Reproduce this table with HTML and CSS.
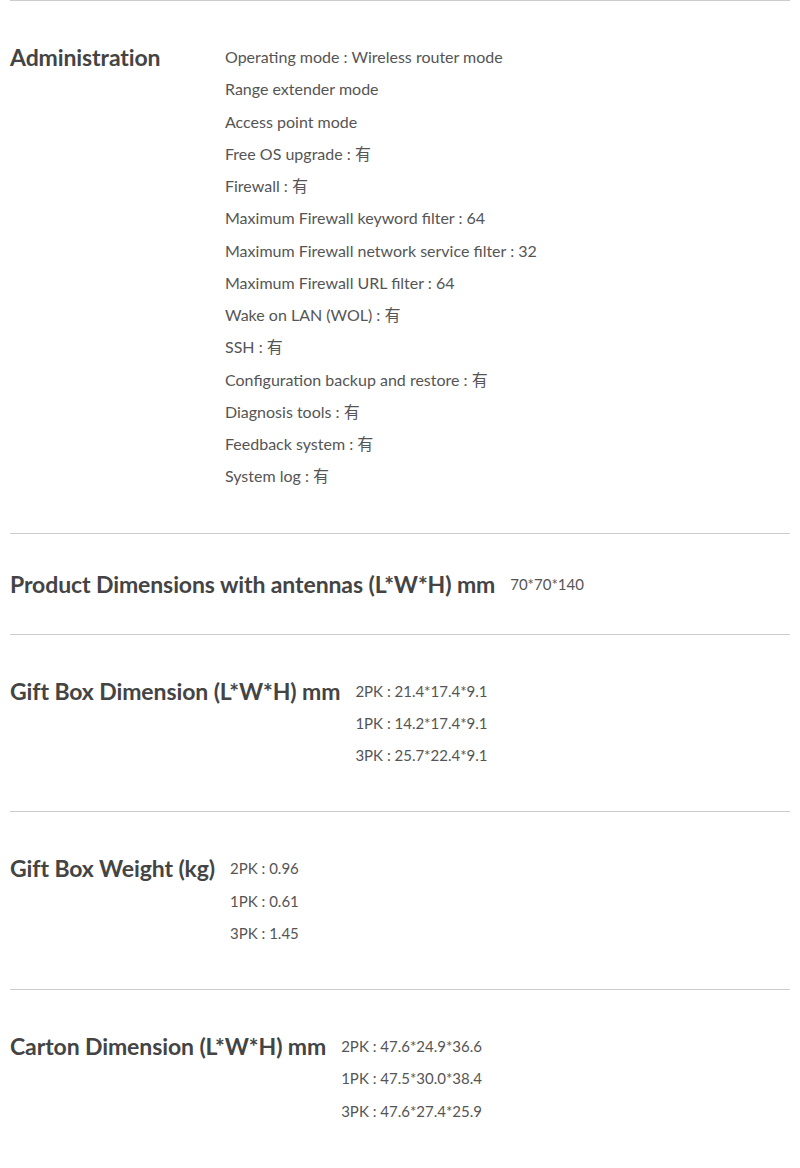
FILE: index.html
```html
<!DOCTYPE html>
<html lang="en">
<head>
<meta charset="utf-8">
<title>Specifications</title>
<link rel="stylesheet" href="styles.css">
</head>
<body>
<div class="specs">
  <section class="spec">
    <h3 class="spec-title">Administration</h3>
    <ul class="spec-values">
      <li>Operating mode : Wireless router mode</li>
      <li>Range extender mode</li>
      <li>Access point mode</li>
      <li>Free OS upgrade : 有</li>
      <li>Firewall : 有</li>
      <li>Maximum Firewall keyword filter : 64</li>
      <li>Maximum Firewall network service filter : 32</li>
      <li>Maximum Firewall URL filter : 64</li>
      <li>Wake on LAN (WOL) : 有</li>
      <li>SSH : 有</li>
      <li>Configuration backup and restore : 有</li>
      <li>Diagnosis tools : 有</li>
      <li>Feedback system : 有</li>
      <li>System log : 有</li>
    </ul>
  </section>
  <section class="spec spec-single">
    <h3 class="spec-title">Product Dimensions with antennas (L*W*H) mm</h3>
    <ul class="spec-values small">
      <li>70*70*140</li>
    </ul>
  </section>
  <section class="spec">
    <h3 class="spec-title">Gift Box Dimension (L*W*H) mm</h3>
    <ul class="spec-values numeric">
      <li>2PK : 21.4*17.4*9.1</li>
      <li>1PK : 14.2*17.4*9.1</li>
      <li>3PK : 25.7*22.4*9.1</li>
    </ul>
  </section>
  <section class="spec">
    <h3 class="spec-title">Gift Box Weight (kg)</h3>
    <ul class="spec-values numeric">
      <li>2PK : 0.96</li>
      <li>1PK : 0.61</li>
      <li>3PK : 1.45</li>
    </ul>
  </section>
  <section class="spec">
    <h3 class="spec-title">Carton Dimension (L*W*H) mm</h3>
    <ul class="spec-values numeric">
      <li>2PK : 47.6*24.9*36.6</li>
      <li>1PK : 47.5*30.0*38.4</li>
      <li>3PK : 47.6*27.4*25.9</li>
    </ul>
  </section>
</div>
</body>
</html>
```

FILE: styles.css
```css
html, body {
  margin: 0;
  padding: 0;
  background: #ffffff;
}

body {
  font-family: "Lato", "Noto Sans CJK SC", sans-serif;
  color: #555555;
}

.specs {
  padding: 0 10px;
}

.spec {
  display: flex;
  align-items: flex-start;
  border-top: 1px solid #cccccc;
  padding: 40px 0 40px;
}

.spec-title {
  margin: 0 15px 0 0;
  min-width: 200px;
  font-size: 23px;
  font-weight: 700;
  line-height: 32px;
  color: #444444;
  letter-spacing: -0.1px;
}

.spec-values {
  list-style: none;
  margin: 0;
  padding: 0;
  font-size: 16px;
  line-height: 32.25px;
}

.spec-values.numeric {
  font-size: 15px;
}

.spec-single {
  align-items: center;
}

.spec-single .spec-title {
  line-height: 20px;
}

.spec-values.small {
  font-size: 15px;
  line-height: 20px;
}
```
